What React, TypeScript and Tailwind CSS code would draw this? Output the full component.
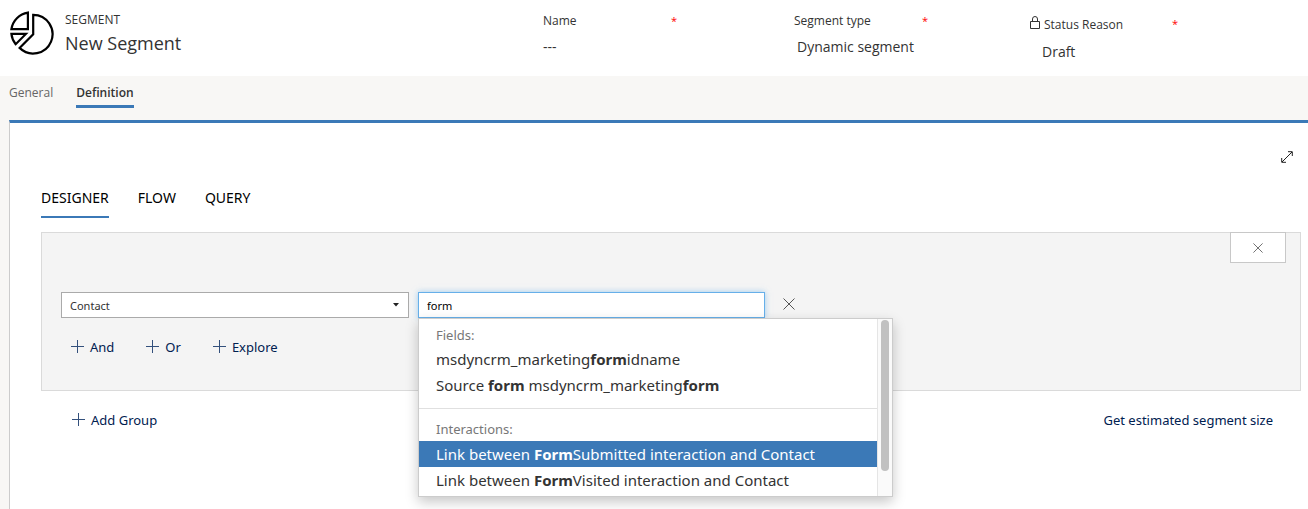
import { useState } from "react";

function SegmentLogo() {
  return (
    <svg viewBox="0 0 44 44" className="h-11 w-11 shrink-0" fill="none" stroke="#000" strokeWidth="2.2" aria-hidden="true">
      <path d="M23.2 3.9 V23.3 L9.6 36.9 A19.3 19.3 0 1 0 23.2 3.9 Z" />
      <path d="M17.9 1.6 V18.2 H1.4 A19.6 19.6 0 0 1 17.9 1.6 Z" />
      <path d="M1.4 22.9 H15.9 L5.7 33.2 A19.6 19.6 0 0 1 1.4 22.9 Z" />
    </svg>
  );
}

function Cross({ className }: { className: string }) {
  return (
    <svg viewBox="0 0 12 12" className={className} stroke="#555" strokeWidth="1" aria-hidden="true">
      <path d="M.5 .5 L11.5 11.5 M11.5 .5 L.5 11.5" />
    </svg>
  );
}

function ActionButton({ label }: { label: string }) {
  return (
    <button type="button" className="flex items-center gap-1.5 text-[13px] leading-5 text-[#002050]">
      <svg viewBox="0 0 13 13" className="mb-0.5 h-[13px] w-[13px]" stroke="#33507c" strokeWidth="1" aria-hidden="true">
        <path d="M6.5 0 V13 M0 6.5 H13" />
      </svg>
      {label}
    </button>
  );
}

function LockIcon() {
  return (
    <svg viewBox="0 0 10 13" className="h-[13px] w-2.5" fill="none" stroke="#333" strokeWidth="1" aria-hidden="true">
      <path d="M.5 5.5 H9.5 V12.5 H.5 Z M2.5 5.5 V3 A2.5 2.5 0 0 1 7.5 3 V5.5" />
    </svg>
  );
}

const required = <span className="text-[11px] leading-4 text-[#f00]">*</span>;

export default function App() {
  const [term, setTerm] = useState("form");
  return (
    <div className="flex min-h-screen flex-col bg-[#f8f7f5] font-['Open_Sans',sans-serif] text-[#333]">
      <header className="flex h-[76px] bg-white pl-2.5">
        <div className="flex flex-1 gap-[11px] pt-[11px]">
          <SegmentLogo />
          <div className="pt-px">
            <p className="text-[12px] leading-4">SEGMENT</p>
            <h1 className="text-[18px] leading-[30px]">New Segment</h1>
          </div>
        </div>
        <dl className="flex">
          <div className="w-[251px] pt-[13px]">
            <dt className="flex w-[134px] justify-between text-[12px] leading-4">Name {required}</dt>
            <dd className="mt-2 text-[14px] leading-5">---</dd>
          </div>
          <div className="w-[236px] pt-[13px]">
            <dt className="flex w-[134px] justify-between text-[12px] leading-4">Segment type {required}</dt>
            <dd className="mt-2 pl-[3px] text-[14px] leading-5">Dynamic segment</dd>
          </div>
          <div className="w-[278px] pt-4">
            <dt className="flex w-[148px] justify-between text-[12px] leading-4">
              <span className="flex gap-1">
                <LockIcon />
                <span className="pt-px">Status Reason</span>
              </span>
              {required}
            </dt>
            <dd className="mt-2 pl-3 text-[14px] leading-[22px]">Draft</dd>
          </div>
        </dl>
      </header>

      <nav className="flex h-11 gap-[23px] pt-[9px] pl-[9px] text-[12px] leading-4">
        <a href="#general" className="h-[23px] text-[#666]">General</a>
        <a href="#definition" className="h-[23px] border-b-3 border-[#3b79b7] font-semibold">Definition</a>
      </nav>

      <main className="ml-[9px] flex-1 border-t-3 border-l border-t-[#3b79b7] border-l-[#ccc] bg-white pr-[7px] pl-[31px] font-['Noto_Sans',sans-serif]">
        <div className="flex justify-end pt-7 pr-2">
          <button type="button" aria-label="Expand">
            <svg viewBox="0 0 12 12" className="h-3 w-3" fill="none" stroke="#222" strokeWidth="1" aria-hidden="true">
              <path d="M1 11 L11 1 M7 .7 H11.3 V5 M.7 7 V11.3 H5" />
            </svg>
          </button>
        </div>

        <div role="tablist" className="mt-6 flex gap-[29px] text-[14px] leading-5 text-black">
          <button type="button" role="tab" aria-selected="true" className="h-[31px] border-b-2 border-[#3b79b7] pb-2">DESIGNER</button>
          <button type="button" role="tab" aria-selected="false" className="h-[31px] pb-2.5">FLOW</button>
          <button type="button" role="tab" aria-selected="false" className="h-[31px] pb-2.5">QUERY</button>
        </div>

        <section className="mt-3.5 border border-[#dadada] bg-[#f4f4f4] pb-[33px]">
          <div className="-mt-px flex justify-end pr-3.5">
            <button type="button" aria-label="Remove group" className="flex h-[31px] w-14 items-center justify-center border border-[#c8c8c8] bg-white">
              <Cross className="h-2.5 w-2.5" />
            </button>
          </div>

          <div className="mt-[29px] flex items-center pl-[19px]">
            <div className="grid w-[348px] items-center">
              <select aria-label="Entity" className="col-start-1 row-start-1 h-[26px] appearance-none border border-[#aaa] bg-white pt-0.5 pl-2 text-[11px] text-[#333]">
                <option>Contact</option>
              </select>
              <svg viewBox="0 0 6 4" className="pointer-events-none col-start-1 row-start-1 mr-2.5 h-1 w-1.5 justify-self-end" fill="#222" aria-hidden="true">
                <path d="M0 0 H6 L3 3.5 Z" />
              </svg>
            </div>
            <div className="relative ml-[9px] w-[347px]">
              <input
                aria-label="Search fields"
                value={term}
                onChange={(e) => setTerm(e.target.value)}
                className="block h-[26px] w-full border border-[#66afe9] bg-white px-2 text-[11px] text-black shadow-[0_0_6px_rgba(102,175,233,0.6)] outline-none"
              />
              <div className="absolute top-full left-0 flex h-[179px] w-[475px] border border-[#ccc] bg-white shadow-[0_5px_12px_rgba(0,0,0,0.22)]">
                <div className="flex-1 text-[15px] leading-[26px]">
                  <p className="mt-[5px] pl-[17px] text-[13px] leading-[22px] text-[#777]">Fields:</p>
                  <ul>
                    <li className="pl-[17px]">msdyncrm_marketing<b>form</b>idname</li>
                    <li className="pl-[17px]">Source <b>form</b> msdyncrm_marketing<b>form</b></li>
                  </ul>
                  <p className="mt-2.5 border-t border-[#e0e0e0] pt-[9px] pb-px pl-[17px] text-[13px] leading-[22px] text-[#777]">Interactions:</p>
                  <ul>
                    <li className="bg-[#3b79b7] pl-[17px] text-white">Link between <b>Form</b>Submitted interaction and Contact</li>
                    <li className="pl-[17px]">Link between <b>Form</b>Visited interaction and Contact</li>
                  </ul>
                </div>
                <div className="w-[15px] border-l border-[#e5e5e5] bg-[#fafafa] pt-px pl-[3px]">
                  <div className="h-[151px] w-2 rounded-full bg-[#c1c1c1]" />
                </div>
              </div>
            </div>
            <button type="button" aria-label="Remove condition" className="ml-[18px] pb-0.5">
              <Cross className="h-3 w-3" />
            </button>
          </div>

          <div className="mt-[19px] flex gap-8 pl-[29px]">
            <ActionButton label="And" />
            <ActionButton label="Or" />
            <ActionButton label="Explore" />
          </div>
        </section>

        <div className="mt-[19px] flex justify-between pr-7 pl-[31px]">
          <ActionButton label="Add Group" />
          <button type="button" className="text-[13px] leading-5 text-[#002050]">Get estimated segment size</button>
        </div>
      </main>
    </div>
  );
}
